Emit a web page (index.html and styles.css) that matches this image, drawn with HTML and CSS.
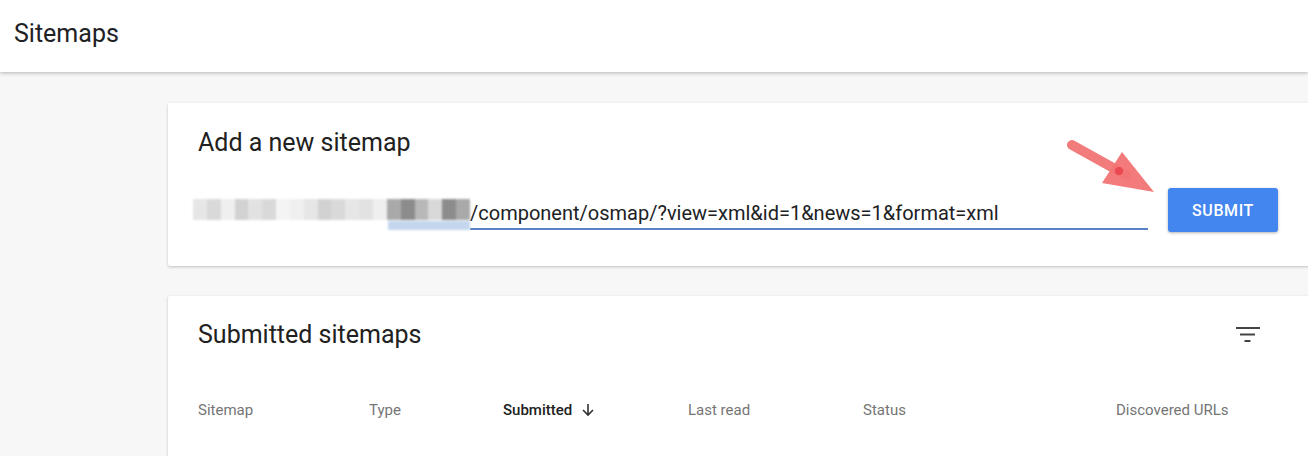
FILE: index.html
```html
<!DOCTYPE html>
<html>
<head>
<meta charset="utf-8">
<link rel="stylesheet" href="styles.css">
</head>
<body>
<header class="topbar"><h1 class="page-title">Sitemaps</h1></header>
<main class="main">
  <section class="card add-card">
    <h2 class="card-title">Add a new sitemap</h2>
    <div class="add-row">
      <div class="field">
        <div class="blur">
          <span class="px p1"></span><span class="px p2"></span><span class="px p3"></span><span class="px p4"></span><span class="px p5"></span><span class="px p2"></span><span class="px p6"></span><span class="px p3"></span><span class="px p1"></span><span class="px p4"></span><span class="px p2"></span><span class="px p1"></span><span class="px p5"></span><span class="px p3"></span><span class="px d1"></span><span class="px d2"></span><span class="px d3"></span><span class="px p2"></span><span class="px d2"></span><span class="px d1"></span>
          <span class="blue-under"></span>
        </div>
        <div class="url">/component/osmap/?view=xml&amp;id=1&amp;news=1&amp;format=xml</div>
      </div>
      <button class="submit">SUBMIT</button>
    </div>
  </section>
  <section class="card list-card">
    <div class="list-head">
      <h2 class="card-title">Submitted sitemaps</h2>
      <svg class="filter" width="24" height="16" viewBox="0 0 24 16"><rect x="0" y="0" width="24" height="2" fill="#444"/><rect x="4" y="6.5" width="15" height="2" fill="#444"/><rect x="8.5" y="13" width="6" height="2" fill="#444"/></svg>
    </div>
    <div class="cols">
      <div class="col">Sitemap</div>
      <div class="col">Type</div>
      <div class="col active">Submitted <svg class="sort" width="14" height="14" viewBox="0 0 14 14"><path d="M7 1v11M2 7l5 5 5-5" fill="none" stroke="#333" stroke-width="1.6"/></svg></div>
      <div class="col">Last read</div>
      <div class="col">Status</div>
      <div class="col">Discovered URLs</div>
    </div>
  </section>
</main>
<svg class="pointer" width="120" height="80" viewBox="0 0 120 80">
  <line x1="12" y1="15" x2="66" y2="45" stroke="#f27474" stroke-width="10" stroke-linecap="round" opacity="0.95"/>
  <polygon points="62,22 94,62 42,53" fill="#f27474" opacity="0.95"/>
  <circle cx="59" cy="41" r="4" fill="#e8484f"/>
</svg>
</body>
</html>
```
FILE: styles.css
```css
html, body { margin: 0; padding: 0; }
body {
  background: #f7f7f7;
  font-family: Roboto, "Liberation Sans", sans-serif;
  color: #212121;
  width: 1308px;
  height: 456px;
  overflow: hidden;
  position: relative;
}
.topbar {
  height: 72px;
  background: #fff;
  box-shadow: 0 1px 4px rgba(0,0,0,0.28);
  display: flex;
  align-items: center;
  padding-left: 14px;
  position: relative;
  z-index: 2;
}
.page-title {
  margin: 0 0 6px 0;
  font-size: 25px;
  font-weight: 400;
  color: #202124;
}
.main {
  padding: 31px 0 0 168px;
  height: 353px;
  overflow: hidden;
}
.card {
  background: #fff;
  width: 1180px;
  border-radius: 2px;
  box-shadow: 0 1px 3px rgba(0,0,0,0.22);
  box-sizing: border-box;
  padding-left: 30px;
}
.add-card {
  height: 163px;
  padding-top: 25px;
}
.card-title {
  margin: 0;
  font-size: 25px;
  line-height: 30px;
  font-weight: 400;
  color: #212121;
}
.add-row {
  display: flex;
  align-items: flex-start;
  margin-top: 30px;
}
.field {
  display: flex;
  width: 955px;
  margin-left: -5px;
  height: 44px;
}
.blur {
  width: 277px;
  height: 44px;
  display: flex;
  align-items: center;
  position: relative;
  filter: blur(1.2px);
}
.px { display: block; width: 14px; height: 21px; margin-top: -2px; }
.p1 { background: #e6e6e6; }
.p2 { background: #d9d9d9; }
.p3 { background: #efefef; }
.p4 { background: #d2d2d2; }
.p5 { background: #e2e2e2; }
.p6 { background: #f4f4f4; }
.d1 { background: #a9a9a9; }
.d2 { background: #8c8c8c; }
.d3 { background: #b8b8b8; }
.blue-under {
  position: absolute;
  left: 195px;
  right: 0;
  bottom: 2px;
  height: 9px;
  background: #c4d6ee;
}
.url {
  flex: 1;
  font-size: 20px;
  line-height: 26px;
  padding-top: 12px;
  box-sizing: border-box;
  height: 42px;
  border-bottom: 2px solid #5a82c2;
  color: #202124;
  white-space: nowrap;
}
.submit {
  margin-left: 20px;
  width: 110px;
  height: 44px;
  border: none;
  border-radius: 3px;
  background: #4386ef;
  color: #fff;
  font-family: Roboto, "Liberation Sans", sans-serif;
  font-size: 16px;
  font-weight: 500;
  letter-spacing: 0.6px;
  box-shadow: 0 1px 3px rgba(0,0,0,0.3);
}
.list-card {
  margin-top: 30px;
  height: 200px;
  padding-top: 24px;
}
.list-head {
  display: flex;
  align-items: center;
  justify-content: space-between;
  width: 1062px;
}
.filter { margin-top: 0; }
.cols {
  display: grid;
  grid-template-columns: 171px 134px 185px 175px 253px 1fr;
  height: 48px;
  align-items: center;
  margin-top: 36px;
  font-size: 15px;
  color: #757575;
}
.col { white-space: nowrap; }
.col.active {
  color: #212121;
  font-weight: 500;
  display: flex;
  align-items: center;
  gap: 9px;
}
.pointer {
  position: absolute;
  left: 1060px;
  top: 130px;
}
```
